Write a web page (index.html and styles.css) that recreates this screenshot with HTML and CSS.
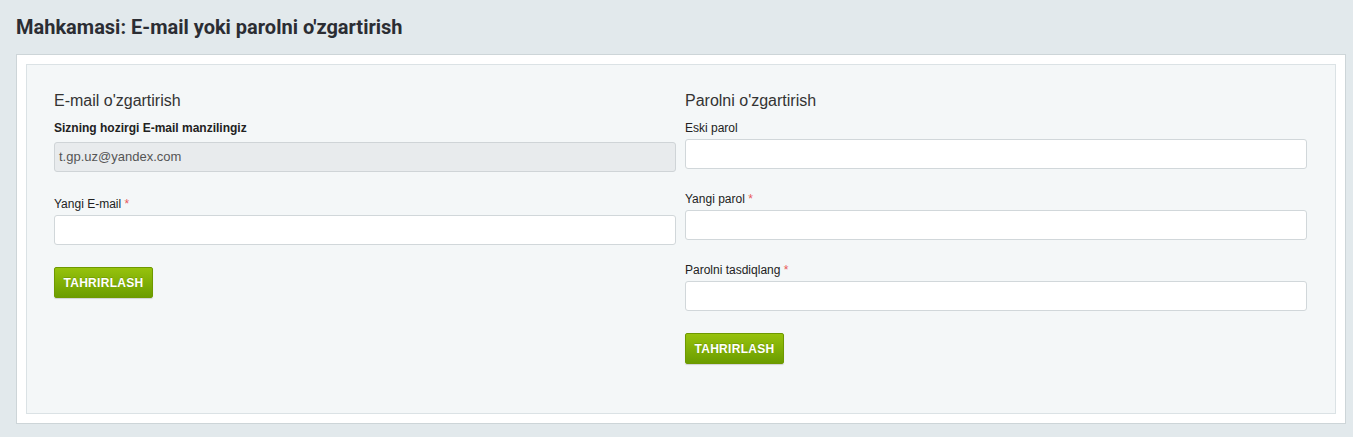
FILE: index.html
```html
<!DOCTYPE html>
<html lang="uz">
<head>
<meta charset="utf-8">
<title>Mahkamasi: E-mail yoki parolni o'zgartirish</title>
<link rel="stylesheet" href="styles.css">
</head>
<body>
<div class="page">
  <h1 class="page-title">Mahkamasi: E-mail yoki parolni o'zgartirish</h1>
  <div class="panel">
    <div class="panel-inner">
      <form class="col">
        <h2 class="col-title">E-mail o'zgartirish</h2>
        <div class="field field-current">
          <label class="label label-bold">Sizning hozirgi E-mail manzilingiz</label>
          <div class="input input-readonly">t.gp.uz@yandex.com</div>
        </div>
        <div class="field">
          <label class="label">Yangi E-mail <span class="req">*</span></label>
          <input class="input" type="text">
        </div>
        <button class="btn" type="button">TAHRIRLASH</button>
      </form>
      <form class="col">
        <h2 class="col-title">Parolni o'zgartirish</h2>
        <div class="field">
          <label class="label">Eski parol</label>
          <input class="input" type="password">
        </div>
        <div class="field">
          <label class="label">Yangi parol <span class="req">*</span></label>
          <input class="input" type="password">
        </div>
        <div class="field">
          <label class="label">Parolni tasdiqlang <span class="req">*</span></label>
          <input class="input" type="password">
        </div>
        <button class="btn" type="button">TAHRIRLASH</button>
      </form>
    </div>
  </div>
</div>
</body>
</html>
```

FILE: styles.css
```css
html, body {
  margin: 0;
  padding: 0;
}
body {
  background: #e2e9ec;
  font-family: Arial, "Liberation Sans", sans-serif;
  color: #222;
}
.page {
  padding: 0 7px 13px 16px;
}
.page-title {
  margin: 0;
  padding: 16px 0;
  font-family: Roboto, Arial, "Liberation Sans", sans-serif;
  font-size: 20px;
  line-height: 22px;
  font-weight: 700;
  color: #2b2d33;
}
.panel {
  background: #fff;
  border: 1px solid #cdd5d8;
  padding: 9px;
}
.panel-inner {
  background: #f4f7f8;
  border: 1px solid #dbe2e5;
  padding: 27px 28px 49px 27px;
  display: grid;
  grid-template-columns: 1fr 1fr;
  column-gap: 9px;
}
.col {
  margin: 0;
  display: flex;
  flex-direction: column;
  align-items: flex-start;
}
.col-title {
  margin: 0 0 11px 0;
  font-size: 16px;
  line-height: 18px;
  font-weight: 400;
  color: #333;
}
.field {
  width: 100%;
  margin-bottom: 23px;
}
.field-current {
  margin-bottom: 25px;
}
.label {
  display: block;
  font-size: 12px;
  line-height: 14px;
  margin-bottom: 4px;
  color: #222;
}
.label-bold {
  font-weight: 700;
  margin-bottom: 7px;
}
.req {
  color: #e85a5a;
}
.input {
  display: block;
  box-sizing: border-box;
  width: 100%;
  height: 30px;
  margin: 0;
  padding: 0 4px;
  background: #fff;
  border: 1px solid #d1d7da;
  border-radius: 3px;
  font-family: inherit;
  font-size: 13px;
  line-height: 28px;
  color: #555;
  outline: none;
}
.input-readonly {
  background: #e8ebed;
  border-color: #cfd4d7;
}
.btn {
  box-sizing: border-box;
  height: 31px;
  width: 99px;
  padding: 0;
  margin-top: -1px;
  border: 1px solid #6e9900;
  border-radius: 2px;
  background: linear-gradient(#96c20c, #6b9d00);
  box-shadow: 0 1px 1px rgba(0, 0, 0, 0.15);
  color: #fff;
  font-family: Arial, "Liberation Sans", sans-serif;
  font-size: 12px;
  font-weight: 700;
  letter-spacing: 0.3px;
  text-shadow: 0 -1px 0 rgba(0, 0, 0, 0.15);
  cursor: pointer;
}
```
